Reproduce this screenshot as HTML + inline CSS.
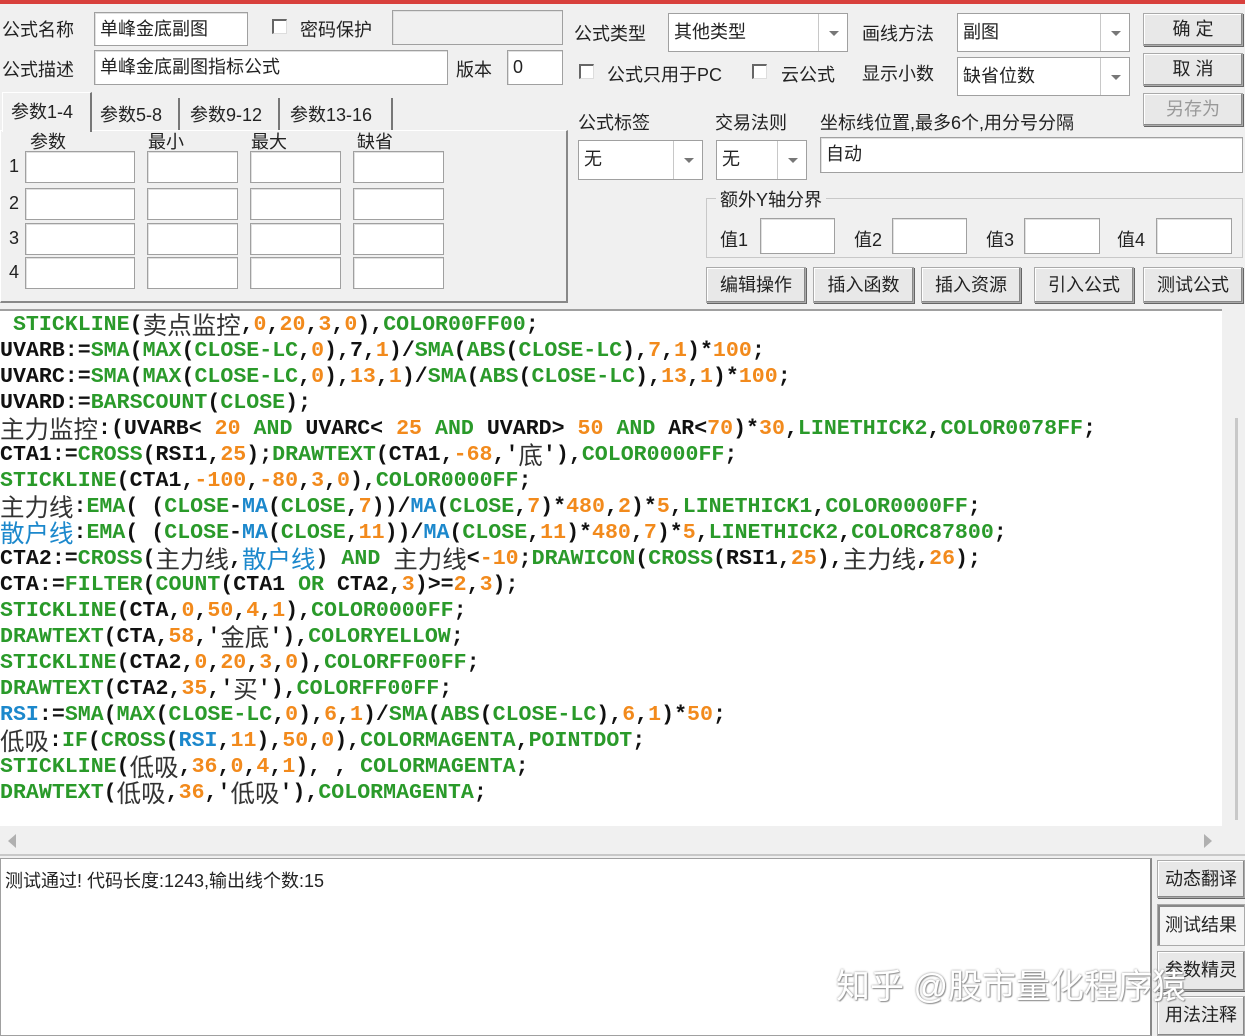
<!DOCTYPE html>
<html><head><meta charset="utf-8"><style>
*{box-sizing:border-box;margin:0;padding:0}
body{width:1245px;height:1036px;overflow:hidden;background:#f0f0f0;position:relative;font-family:"Liberation Sans","Noto Sans CJK SC",sans-serif;font-size:18px;color:#222}
.a{position:absolute;white-space:nowrap}
.in{position:absolute;background:#fff;border:1px solid #a0a0a0;box-shadow:inset 1px 1px 0 #e0e0e0;padding:4px 5px;font-size:18px;line-height:24px}
.cb{position:absolute;width:15px;height:15px;background:#fff;border-left:2px solid #666;border-top:2px solid #666;border-right:1px solid #ddd;border-bottom:1px solid #ddd}
.cmb{position:absolute;background:#fff;border:1px solid #a0a0a0;padding:6px 5px;font-size:18px;line-height:24px}
.cmb .dd{position:absolute;right:0;top:0;bottom:0;width:29px;border-left:1px solid #c8c8c8}
.cmb .dd:after{content:"";position:absolute;left:10px;top:50%;margin-top:-2px;border-left:5px solid transparent;border-right:5px solid transparent;border-top:5px solid #777}
.btn{position:absolute;background:#e8e8e8;border:1px solid #aaa;box-shadow:inset -1px -1px 0 #888,inset 1px 1px 0 #fff,1px 1px 0 #666;text-align:center;font-size:18px;line-height:30px}
#code{position:absolute;left:0;top:309px;width:1222px;height:517px;background:#fff;border-top:2px solid #a0a0a0;padding-top:1px}
.l{height:26px;line-height:26px;font-family:"Liberation Mono",monospace;font-weight:bold;font-size:21.6px;white-space:pre;color:#111;overflow:visible}
.l span{display:inline-block;vertical-align:top;height:26px;line-height:26px}
.l .c{font-family:"Noto Sans CJK SC",sans-serif;font-weight:normal;font-size:24.5px;color:#333;line-height:26px}
.g{color:#2a9a2a}.o{color:#f28a1c}.b{color:#1c88cc}
.l .c.b{color:#1c88cc}
</style></head><body>
<div class="a" style="left:0;top:0;width:1245px;height:4px;background:#d8403c"></div>

<div class="a" style="left:2px;top:16px">公式名称</div>
<div class="in" style="left:94px;top:12px;width:154px;height:34px">单峰金底副图</div>
<div class="cb" style="left:272px;top:19px"></div>
<div class="a" style="left:300px;top:16px">密码保护</div>
<div class="in" style="left:392px;top:10px;width:171px;height:35px;background:#f0f0f0"></div>
<div class="a" style="left:2px;top:56px">公式描述</div>
<div class="in" style="left:94px;top:50px;width:354px;height:35px">单峰金底副图指标公式</div>
<div class="a" style="left:456px;top:56px">版本</div>
<div class="in" style="left:507px;top:50px;width:56px;height:35px">0</div>

<div class="a" style="left:0;top:130px;width:568px;height:173px;border:1px solid #fff;border-right:2px solid #888;border-bottom:2px solid #888;background:#f0f0f0"></div>
<div class="a" style="left:2px;top:92px;width:90px;height:40px;background:#f0f0f0;border-left:1px solid #fff;border-top:1px solid #fff;border-right:2px solid #777;padding:5px 0 0 8px">参数1-4</div>
<div class="a" style="left:94px;top:98px;width:86px;height:32px;border-right:2px solid #777;padding:3px 0 0 6px">参数5-8</div>
<div class="a" style="left:182px;top:98px;width:98px;height:32px;border-right:2px solid #777;padding:3px 0 0 8px">参数9-12</div>
<div class="a" style="left:282px;top:98px;width:111px;height:32px;border-right:2px solid #777;padding:3px 0 0 8px">参数13-16</div>
<div class="a" style="left:30px;top:128px">参数</div>
<div class="a" style="left:148px;top:128px">最小</div>
<div class="a" style="left:251px;top:128px">最大</div>
<div class="a" style="left:357px;top:128px">缺省</div>
<div class="a" style="left:9px;top:156px">1</div><div class="a" style="left:9px;top:193px">2</div><div class="a" style="left:9px;top:228px">3</div><div class="a" style="left:9px;top:262px">4</div>
<div class="in" style="left:25px;top:151px;width:110px;height:32px"></div><div class="in" style="left:147px;top:151px;width:91px;height:32px"></div><div class="in" style="left:250px;top:151px;width:91px;height:32px"></div><div class="in" style="left:353px;top:151px;width:91px;height:32px"></div>
<div class="in" style="left:25px;top:188px;width:110px;height:32px"></div><div class="in" style="left:147px;top:188px;width:91px;height:32px"></div><div class="in" style="left:250px;top:188px;width:91px;height:32px"></div><div class="in" style="left:353px;top:188px;width:91px;height:32px"></div>
<div class="in" style="left:25px;top:223px;width:110px;height:32px"></div><div class="in" style="left:147px;top:223px;width:91px;height:32px"></div><div class="in" style="left:250px;top:223px;width:91px;height:32px"></div><div class="in" style="left:353px;top:223px;width:91px;height:32px"></div>
<div class="in" style="left:25px;top:257px;width:110px;height:32px"></div><div class="in" style="left:147px;top:257px;width:91px;height:32px"></div><div class="in" style="left:250px;top:257px;width:91px;height:32px"></div><div class="in" style="left:353px;top:257px;width:91px;height:32px"></div>

<div class="a" style="left:574px;top:20px">公式类型</div>
<div class="cmb" style="left:668px;top:13px;width:180px;height:39px">其他类型<span class="dd"></span></div>
<div class="a" style="left:862px;top:20px">画线方法</div>
<div class="cmb" style="left:957px;top:13px;width:173px;height:39px">副图<span class="dd"></span></div>
<div class="btn" style="left:1143px;top:13px;width:100px;height:33px">确 定</div>
<div class="btn" style="left:1143px;top:53px;width:100px;height:33px">取 消</div>
<div class="btn" style="left:1143px;top:93px;width:100px;height:33px;color:#999">另存为</div>
<div class="cb" style="left:579px;top:64px"></div>
<div class="a" style="left:607px;top:61px">公式只用于PC</div>
<div class="cb" style="left:752px;top:64px"></div>
<div class="a" style="left:781px;top:61px">云公式</div>
<div class="a" style="left:862px;top:60px">显示小数</div>
<div class="cmb" style="left:957px;top:57px;width:173px;height:39px">缺省位数<span class="dd"></span></div>
<div class="a" style="left:578px;top:109px">公式标签</div>
<div class="a" style="left:715px;top:109px">交易法则</div>
<div class="a" style="left:820px;top:109px">坐标线位置,最多6个,用分号分隔</div>
<div class="cmb" style="left:578px;top:140px;width:125px;height:40px">无<span class="dd"></span></div>
<div class="cmb" style="left:716px;top:140px;width:91px;height:40px">无<span class="dd"></span></div>
<div class="in" style="left:820px;top:137px;width:423px;height:36px">自动</div>
<div class="a" style="left:706px;top:198px;width:537px;height:60px;border:1px solid #c8c8c8"></div>
<div class="a" style="left:716px;top:186px;background:#f0f0f0;padding:0 4px">额外Y轴分界</div>
<div class="a" style="left:720px;top:226px">值1</div><div class="in" style="left:760px;top:218px;width:75px;height:36px"></div>
<div class="a" style="left:854px;top:226px">值2</div><div class="in" style="left:892px;top:218px;width:75px;height:36px"></div>
<div class="a" style="left:986px;top:226px">值3</div><div class="in" style="left:1024px;top:218px;width:76px;height:36px"></div>
<div class="a" style="left:1117px;top:226px">值4</div><div class="in" style="left:1156px;top:218px;width:76px;height:36px"></div>
<div class="btn" style="left:706px;top:267px;width:100px;height:36px;line-height:34px">编辑操作</div>
<div class="btn" style="left:813px;top:267px;width:101px;height:36px;line-height:34px">插入函数</div>
<div class="btn" style="left:921px;top:267px;width:100px;height:36px;line-height:34px">插入资源</div>
<div class="btn" style="left:1034px;top:267px;width:100px;height:36px;line-height:34px">引入公式</div>
<div class="btn" style="left:1143px;top:267px;width:100px;height:36px;line-height:34px">测试公式</div>

<div id="code">
<div class="l"> <span class="g">STICKLINE</span>(<span class="c">卖点监控</span>,<span class="o">0</span>,<span class="o">20</span>,<span class="o">3</span>,<span class="o">0</span>),<span class="g">COLOR00FF00</span>;</div>
<div class="l">UVARB:=<span class="g">SMA</span>(<span class="g">MAX</span>(<span class="g">CLOSE-LC</span>,<span class="o">0</span>),7,<span class="o">1</span>)/<span class="g">SMA</span>(<span class="g">ABS</span>(<span class="g">CLOSE-LC</span>),<span class="o">7</span>,<span class="o">1</span>)*<span class="o">100</span>;</div>
<div class="l">UVARC:=<span class="g">SMA</span>(<span class="g">MAX</span>(<span class="g">CLOSE-LC</span>,<span class="o">0</span>),<span class="o">13</span>,<span class="o">1</span>)/<span class="g">SMA</span>(<span class="g">ABS</span>(<span class="g">CLOSE-LC</span>),<span class="o">13</span>,<span class="o">1</span>)*<span class="o">100</span>;</div>
<div class="l">UVARD:=<span class="g">BARSCOUNT</span>(<span class="g">CLOSE</span>);</div>
<div class="l"><span class="c">主力监控</span>:(UVARB&lt; <span class="o">20</span> <span class="g">AND</span> UVARC&lt; <span class="o">25</span> <span class="g">AND</span> UVARD&gt; <span class="o">50</span> <span class="g">AND</span> AR&lt;<span class="o">70</span>)*<span class="o">30</span>,<span class="g">LINETHICK2</span>,<span class="g">COLOR0078FF</span>;</div>
<div class="l">CTA1:=<span class="g">CROSS</span>(RSI1,<span class="o">25</span>);<span class="g">DRAWTEXT</span>(CTA1,<span class="o">-68</span>,'<span class="c">底</span>'),<span class="g">COLOR0000FF</span>;</div>
<div class="l"><span class="g">STICKLINE</span>(CTA1,<span class="o">-100</span>,<span class="o">-80</span>,<span class="o">3</span>,<span class="o">0</span>),<span class="g">COLOR0000FF</span>;</div>
<div class="l"><span class="c">主力线</span>:<span class="g">EMA</span>( (<span class="g">CLOSE</span>-<span class="b">MA</span>(<span class="g">CLOSE</span>,<span class="o">7</span>))/<span class="b">MA</span>(<span class="g">CLOSE</span>,<span class="o">7</span>)*<span class="o">480</span>,<span class="o">2</span>)*<span class="o">5</span>,<span class="g">LINETHICK1</span>,<span class="g">COLOR0000FF</span>;</div>
<div class="l"><span class="c b">散户线</span>:<span class="g">EMA</span>( (<span class="g">CLOSE</span>-<span class="b">MA</span>(<span class="g">CLOSE</span>,<span class="o">11</span>))/<span class="b">MA</span>(<span class="g">CLOSE</span>,<span class="o">11</span>)*<span class="o">480</span>,<span class="o">7</span>)*<span class="o">5</span>,<span class="g">LINETHICK2</span>,<span class="g">COLORC87800</span>;</div>
<div class="l">CTA2:=<span class="g">CROSS</span>(<span class="c">主力线</span>,<span class="c b">散户线</span>) <span class="g">AND</span> <span class="c">主力线</span>&lt;<span class="o">-10</span>;<span class="g">DRAWICON</span>(<span class="g">CROSS</span>(RSI1,<span class="o">25</span>),<span class="c">主力线</span>,<span class="o">26</span>);</div>
<div class="l">CTA:=<span class="g">FILTER</span>(<span class="g">COUNT</span>(CTA1 <span class="g">OR</span> CTA2,<span class="o">3</span>)&gt;=<span class="o">2</span>,<span class="o">3</span>);</div>
<div class="l"><span class="g">STICKLINE</span>(CTA,<span class="o">0</span>,<span class="o">50</span>,<span class="o">4</span>,<span class="o">1</span>),<span class="g">COLOR0000FF</span>;</div>
<div class="l"><span class="g">DRAWTEXT</span>(CTA,<span class="o">58</span>,'<span class="c">金底</span>'),<span class="g">COLORYELLOW</span>;</div>
<div class="l"><span class="g">STICKLINE</span>(CTA2,<span class="o">0</span>,<span class="o">20</span>,<span class="o">3</span>,<span class="o">0</span>),<span class="g">COLORFF00FF</span>;</div>
<div class="l"><span class="g">DRAWTEXT</span>(CTA2,<span class="o">35</span>,'<span class="c">买</span>'),<span class="g">COLORFF00FF</span>;</div>
<div class="l"><span class="b">RSI</span>:=<span class="g">SMA</span>(<span class="g">MAX</span>(<span class="g">CLOSE-LC</span>,<span class="o">0</span>),<span class="o">6</span>,<span class="o">1</span>)/<span class="g">SMA</span>(<span class="g">ABS</span>(<span class="g">CLOSE-LC</span>),<span class="o">6</span>,<span class="o">1</span>)*<span class="o">50</span>;</div>
<div class="l"><span class="c">低吸</span>:<span class="g">IF</span>(<span class="g">CROSS</span>(<span class="b">RSI</span>,<span class="o">11</span>),<span class="o">50</span>,<span class="o">0</span>),<span class="g">COLORMAGENTA</span>,<span class="g">POINTDOT</span>;</div>
<div class="l"><span class="g">STICKLINE</span>(<span class="c">低吸</span>,<span class="o">36</span>,<span class="o">0</span>,<span class="o">4</span>,<span class="o">1</span>), , <span class="g">COLORMAGENTA</span>;</div>
<div class="l"><span class="g">DRAWTEXT</span>(<span class="c">低吸</span>,<span class="o">36</span>,'<span class="c">低吸</span>'),<span class="g">COLORMAGENTA</span>;</div>
</div>
<div class="a" style="left:1222px;top:309px;width:23px;height:517px;background:#f0f0f0"></div>
<div class="a" style="left:1235px;top:418px;width:3px;height:402px;background:#c8c8c8"></div>
<div class="a" style="left:0;top:826px;width:1245px;height:30px;background:#f0f0f0;border-bottom:2px solid #c8c8c8"></div>
<div class="a" style="left:8px;top:834px;border-top:7px solid transparent;border-bottom:7px solid transparent;border-right:8px solid #b0b0b0"></div>
<div class="a" style="left:1204px;top:834px;border-top:7px solid transparent;border-bottom:7px solid transparent;border-left:8px solid #b0b0b0"></div>

<div class="a" style="left:0;top:858px;width:1152px;height:178px;background:#fff;border:1px solid #a0a0a0;border-right:2px solid #888"></div>
<div class="a" style="left:5px;top:867px;font-size:18px">测试通过! 代码长度:1243,输出线个数:15</div>
<div class="btn" style="left:1157px;top:860px;width:88px;height:38px;line-height:36px">动态翻译</div>
<div class="btn" style="left:1157px;top:904px;width:88px;height:42px;line-height:40px;background:#f4f4f4;box-shadow:inset 2px 2px 0 #888">测试结果</div>
<div class="btn" style="left:1157px;top:951px;width:88px;height:40px;line-height:36px">参数精灵</div>
<div class="btn" style="left:1157px;top:996px;width:88px;height:40px;line-height:36px">用法注释</div>
<div class="a" style="left:836px;top:965px;font-size:34px;color:#fff;text-shadow:0 0 2px #888,1px 1px 1px #999;line-height:44px">知乎 @股市量化程序猿</div>
</body></html>
